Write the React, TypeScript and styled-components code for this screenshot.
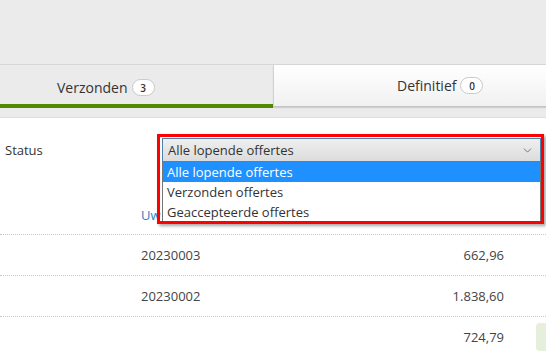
import React from 'react';
import styled, { createGlobalStyle } from 'styled-components';
import { ChevronDown } from 'lucide-react';

const GlobalStyle = createGlobalStyle`
  html, body {
    margin: 0;
    padding: 0;
    background: #fff;
    overflow: hidden;
  }
  body {
    font-family: "Open Sans", "Liberation Sans", sans-serif;
    font-size: 13px;
    color: #333;
  }
`;

const tabs = [
    { id: 'verzonden', label: 'Verzonden', count: 3, active: true },
    { id: 'definitief', label: 'Definitief', count: 0, active: false },
];

const options = ['Alle lopende offertes', 'Verzonden offertes', 'Geaccepteerde offertes'];

const rows = [
    { id: 1, number: '20230003', amount: '662,96', tag: false },
    { id: 2, number: '20230002', amount: '1.838,60', tag: false },
    { id: 3, number: '', amount: '724,79', tag: true },
];

const App = () => {
    return (
        <Page>
            <GlobalStyle />
            <TopArea />
            <TabBar>
                {tabs.map((tab) => (
                    <Tab key={tab.id} $active={tab.active}>
                        {tab.label}
                        <Badge>{tab.count}</Badge>
                    </Tab>
                ))}
            </TabBar>
            <Strip />
            <Content>
                <FilterRow>
                    <Label>Status</Label>
                    <SelectWrap>
                        <SelectBox>
                            <span>{options[0]}</span>
                            <ChevronDown size={13} strokeWidth={1.6} color="#666" />
                        </SelectBox>
                        <OptionList>
                            {options.map((option, i) => (
                                <Option key={option} $selected={i === 0}>{option}</Option>
                            ))}
                        </OptionList>
                        <Highlight />
                    </SelectWrap>
                </FilterRow>
                <Table>
                    <HeaderRow>
                        <Spacer />
                        <HeadCell>Uw referentie</HeadCell>
                        <HeadAmount>Bedrag</HeadAmount>
                        <TagCell />
                    </HeaderRow>
                    {rows.map((row) => (
                        <Row key={row.id}>
                            <Spacer />
                            <NumberCell>{row.number}</NumberCell>
                            <AmountCell>{row.amount}</AmountCell>
                            <TagCell>{row.tag && <Tag />}</TagCell>
                        </Row>
                    ))}
                </Table>
            </Content>
        </Page>
    );
};

export default App;

const Page = styled.div`
  width: 546px;
  height: 354px;
  overflow: hidden;
`;

const TopArea = styled.div`
  height: 64px;
  background: #ebebeb;
`;

const TabBar = styled.div`
  display: flex;
  width: 668px;
  margin-left: -61px;
  height: 44px;
  background: #ebebeb;
  box-sizing: border-box;
  border-top: 1px solid #d6d6d6;
`;

const Tab = styled.div<{ $active: boolean }>`
  flex: 1;
  display: flex;
  align-items: center;
  justify-content: center;
  gap: 4px;
  box-sizing: border-box;
  font-size: 14px;
  color: #333;
  background: ${(p) => (p.$active ? '#ebebeb' : 'linear-gradient(#ffffff, #f1f1f1)')};
  border-bottom: ${(p) => (p.$active ? '4px solid #4f8a00' : '1px solid #c6c6c6')};
  border-left: ${(p) => (p.$active ? 'none' : '1px solid #d2d2d2')};
  padding-top: ${(p) => (p.$active ? '6px' : '0')};
  margin-bottom: ${(p) => (p.$active ? '0' : '1px')};
  box-shadow: ${(p) => (p.$active ? 'none' : '0 1px 1px rgba(0, 0, 0, 0.12)')};
`;

const Badge = styled.span`
  display: inline-flex;
  align-items: center;
  justify-content: center;
  min-width: 23px;
  height: 17px;
  border-radius: 9px;
  border: 1px solid #c9c9c9;
  background: #fff;
  font-size: 10px;
  font-weight: 600;
  color: #333;
  box-sizing: border-box;
`;

const Strip = styled.div`
  height: 9px;
  background: #ebebeb;
  border-bottom: 1px solid #dedede;
`;

const Content = styled.div`
  background: #fff;
`;

const FilterRow = styled.div`
  display: flex;
  align-items: center;
  padding: 20px 0 0 5px;
`;

const Label = styled.div`
  width: 157px;
  flex-shrink: 0;
  font-size: 13px;
  color: #333;
`;

const SelectWrap = styled.div`
  position: relative;
  width: 379px;
  flex-shrink: 0;
`;

const SelectBox = styled.div`
  display: flex;
  align-items: center;
  justify-content: space-between;
  height: 24px;
  box-sizing: border-box;
  padding: 0 6px 0 5px;
  border: 1px solid #4f81b0;
  background: linear-gradient(#efefef, #dcdcdc);
  font-size: 13px;
  color: #333;
`;

const OptionList = styled.div`
  position: absolute;
  top: 24px;
  left: 0;
  width: 379px;
  background: #fff;
  border: 1px solid #767676;
  border-top: none;
  box-sizing: border-box;
  z-index: 2;
`;

const Option = styled.div<{ $selected: boolean }>`
  height: 20px;
  line-height: 20px;
  padding-left: 4px;
  font-size: 13px;
  color: ${(p) => (p.$selected ? '#fff' : '#333')};
  background: ${(p) => (p.$selected ? '#1e90ff' : '#fff')};
`;

const Highlight = styled.div`
  position: absolute;
  top: -4px;
  left: -5px;
  width: 387px;
  height: 90px;
  box-sizing: border-box;
  border: 3px solid #ff0000;
  box-shadow: 2px 2px 3px rgba(0, 0, 0, 0.35);
  pointer-events: none;
  z-index: 3;
`;

const Table = styled.div`
  margin-top: 33px;
`;

const HeaderRow = styled.div`
  display: flex;
  align-items: center;
  height: 39px;
  border-bottom: 1px dotted #c8c8c8;
`;

const Row = styled.div`
  display: flex;
  align-items: center;
  height: 40px;
  border-bottom: 1px dotted #c8c8c8;
  color: #444;
`;

const Spacer = styled.div`
  width: 141px;
  flex-shrink: 0;
`;

const HeadCell = styled.div`
  width: 200px;
  flex-shrink: 0;
  white-space: nowrap;
  color: #2f80c3;
`;

const HeadAmount = styled.div`
  width: 163px;
  flex-shrink: 0;
  text-align: right;
  color: #2f80c3;
`;

const NumberCell = styled.div`
  width: 200px;
  flex-shrink: 0;
`;

const AmountCell = styled.div`
  width: 163px;
  flex-shrink: 0;
  text-align: right;
`;

const TagCell = styled.div`
  margin-left: 32px;
  flex-shrink: 0;
  display: flex;
  align-items: center;
`;

const Tag = styled.div`
  width: 60px;
  height: 28px;
  border-radius: 4px;
  background: #e6efdb;
`;
